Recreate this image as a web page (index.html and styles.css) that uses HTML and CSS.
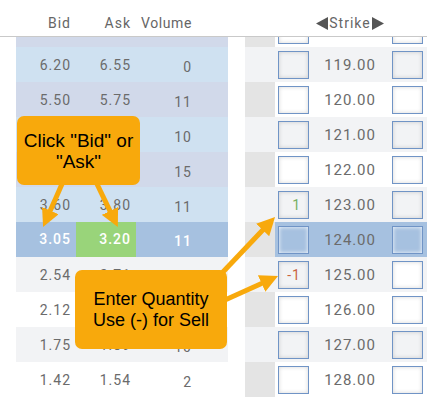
FILE: index.html
```html
<!DOCTYPE html>
<html lang="en">
<head>
    <meta charset="UTF-8">
    <meta name="viewport" content="width=device-width, initial-scale=1.0">
    <title>Option Chain - Trade Entry</title>
    <link rel="stylesheet" href="styles.css">
</head>
<body>
    <div class="page">
        <div class="head">
            <div class="head-calls">
                <span class="bid">Bid</span>
                <span class="ask">Ask</span>
                <span class="vol">Volume</span>
            </div>
            <div class="head-strikes">
                <span></span>
                <span></span>
                <span class="strike-h">
                    <svg class="tri" width="12" height="13" viewBox="0 0 12 13"><path d="M12 0 L0 6.5 L12 13 Z"/></svg>Strike<svg class="tri" width="12" height="13" viewBox="0 0 12 13"><path d="M0 0 L12 6.5 L0 13 Z"/></svg>
                </span>
                <span></span>
            </div>
        </div>

        <div class="chain">
            <div class="calls">
                <div class="row lav first"><span class="bid"></span><span class="ask"></span><span class="vol"></span></div>
                <div class="row blue"><span class="bid">6.20</span><span class="ask">6.55</span><span class="vol">0</span></div>
                <div class="row lav"><span class="bid">5.50</span><span class="ask">5.75</span><span class="vol">11</span></div>
                <div class="row blue"><span class="bid">4.85</span><span class="ask">5.05</span><span class="vol">10</span></div>
                <div class="row lav"><span class="bid">4.20</span><span class="ask">4.40</span><span class="vol">15</span></div>
                <div class="row blue"><span class="bid">3.60</span><span class="ask">3.80</span><span class="vol">11</span></div>
                <div class="row hl"><span class="bid">3.05</span><span class="ask picked">3.20</span><span class="vol">11</span></div>
                <div class="row grey"><span class="bid">2.54</span><span class="ask">2.71</span><span class="vol">12</span></div>
                <div class="row white"><span class="bid">2.12</span><span class="ask">2.26</span><span class="vol">4</span></div>
                <div class="row grey"><span class="bid">1.75</span><span class="ask">1.89</span><span class="vol">10</span></div>
                <div class="row white"><span class="bid">1.42</span><span class="ask">1.54</span><span class="vol">2</span></div>
            </div>

            <div class="strikes">
                <div class="srow white first"><span class="side"></span><span class="qty"></span><span class="strike"></span><span class="qty"></span></div>
                <div class="srow grey"><span class="side"></span><span class="qty"></span><span class="strike">119.00</span><span class="qty"></span></div>
                <div class="srow white"><span class="side"></span><span class="qty"></span><span class="strike">120.00</span><span class="qty"></span></div>
                <div class="srow grey"><span class="side"></span><span class="qty"></span><span class="strike">121.00</span><span class="qty"></span></div>
                <div class="srow white"><span class="side"></span><span class="qty"></span><span class="strike">122.00</span><span class="qty"></span></div>
                <div class="srow grey"><span class="side"></span><span class="qty buy">1</span><span class="strike">123.00</span><span class="qty"></span></div>
                <div class="srow hl"><span class="side"></span><span class="qty"></span><span class="strike">124.00</span><span class="qty"></span></div>
                <div class="srow grey"><span class="side"></span><span class="qty sell">-1</span><span class="strike">125.00</span><span class="qty blank"></span></div>
                <div class="srow white"><span class="side"></span><span class="qty"></span><span class="strike">126.00</span><span class="qty"></span></div>
                <div class="srow grey"><span class="side"></span><span class="qty"></span><span class="strike">127.00</span><span class="qty"></span></div>
                <div class="srow white"><span class="side"></span><span class="qty"></span><span class="strike">128.00</span><span class="qty"></span></div>
            </div>
        </div>

        <!-- help callouts -->
        <div class="callout callout-bid">Click "Bid" or<br>"Ask"</div>
        <div class="callout callout-qty">Enter Quantity<br>Use (-) for Sell</div>

        <svg class="arrows" width="437" height="397" viewBox="0 0 437 397">
            <defs>
                <marker id="head" markerUnits="userSpaceOnUse" markerWidth="18" markerHeight="18" viewBox="0 0 18 18" refX="6" refY="9" orient="auto">
                    <path d="M0 0 L18 9 L0 18 Z" fill="#f8a90c"/>
                </marker>
            </defs>
            <line x1="62" y1="184" x2="47.9" y2="216.1" marker-end="url(#head)"/>
            <line x1="97" y1="184" x2="112.6" y2="216.3" marker-end="url(#head)"/>
            <line x1="222" y1="273" x2="266.8" y2="225.7" marker-end="url(#head)"/>
            <line x1="225" y1="300" x2="267.1" y2="281" marker-end="url(#head)"/>
        </svg>
    </div>
</body>
</html>
```

FILE: styles.css
```css
/* Option chain styles */
body {
    margin: 0;
    background-color: #fff;
    font-family: 'Roboto', 'Liberation Sans', sans-serif;
    overflow: hidden;
}

.page {
    position: relative;
    width: 437px;
    height: 397px;
    overflow: hidden;
}

/* column headers */
.head {
    display: flex;
    width: 427px;
    height: 37px;
    box-sizing: border-box;
    border-bottom: 1px solid #c9c9c9;
    color: #666;
    font-size: 14px;
    letter-spacing: 1px;
}

.head-calls {
    display: grid;
    grid-template-columns: 60px 60px 92px;
    margin-left: 16px;
    align-items: end;
    padding-bottom: 5px;
}

.head-strikes {
    display: grid;
    grid-template-columns: 30px 35px 80px 37px;
    margin-left: 17px;
    align-items: end;
    padding-bottom: 5px;
}

.head-calls span,
.calls .row span {
    text-align: right;
    padding-right: 5px;
}

.head-calls .vol,
.calls .row .vol {
    padding-right: 36px;
}

.head-calls .vol {
    letter-spacing: 0.6px;
}

.strike-h {
    display: flex;
    align-items: center;
    justify-content: center;
    letter-spacing: 1px;
}

.tri {
    fill: #555;
    margin: 0 1px;
}

/* rows */
.chain {
    display: flex;
    gap: 17px;
    padding-left: 16px;
    height: 360px;
    overflow: hidden;
}

.calls {
    width: 212px;
}

.strikes {
    width: 182px;
}

.row,
.srow {
    display: grid;
    height: 35px;
    align-items: center;
    color: #6b6b6b;
    font-size: 14px;
    letter-spacing: 1px;
}

.row {
    grid-template-columns: 60px 60px 92px;
}

.row .vol {
    padding-top: 5px;
}

.first {
    margin-top: -25px;
}

.row.blue { background-color: #cfe1f1; }
.row.lav { background-color: #d1d9ea; }
.grey { background-color: #f2f3f5; }
.white { background-color: #fff; }

.row.hl {
    background-color: #a6c1e0;
    color: #fff;
    font-weight: 500;
}

.row.hl span {
    height: 35px;
    line-height: 35px;
}

.row.hl .vol {
    padding-top: 2px;
    height: 33px;
}

.row.hl .picked {
    background-color: #99d47a;
}

/* strike side */
.srow {
    grid-template-columns: 30px 35px 80px 37px;
}

.srow .side {
    height: 35px;
}

.srow.white .side,
.srow.hl .side {
    background-color: #e4e4e4;
}

.srow.hl {
    background: linear-gradient(to right, #e4e4e4 30px, #a6c1e0 30px);
}

.strike {
    text-align: center;
    font-size: 15px;
    letter-spacing: 0.9px;
}

.qty {
    width: 31px;
    height: 28px;
    box-sizing: border-box;
    margin-left: 3px;
    border: 1px solid #7094c6;
    box-shadow: inset 0 0 4px rgba(0, 0, 0, 0.16);
    text-align: right;
    padding-right: 7px;
    line-height: 26px;
    font-size: 14px;
}

.srow .qty:last-child {
    margin-left: 2px;
}

.srow.hl .qty {
    box-shadow: inset 0 0 4px rgba(255, 255, 255, 0.9);
}

.qty.blank {
    background-color: #fff;
}

.qty.buy { color: #77b062; }
.qty.sell { color: #c9643f; }

/* help callouts */
.callout {
    position: absolute;
    display: flex;
    align-items: center;
    justify-content: center;
    background-color: #f8a90c;
    border-radius: 7px;
    color: #000;
    font-family: 'Liberation Sans', Arial, sans-serif;
    font-size: 18px;
    line-height: 21px;
    text-align: center;
}

.callout-bid {
    left: 17px;
    top: 116px;
    width: 123px;
    height: 69px;
    font-size: 19px;
}

.callout-qty {
    left: 75px;
    top: 270px;
    width: 152px;
    height: 79px;
}

.arrows {
    position: absolute;
    top: 0;
    left: 0;
    pointer-events: none;
}

.arrows line {
    stroke: #f8a90c;
    stroke-width: 5;
}
```
